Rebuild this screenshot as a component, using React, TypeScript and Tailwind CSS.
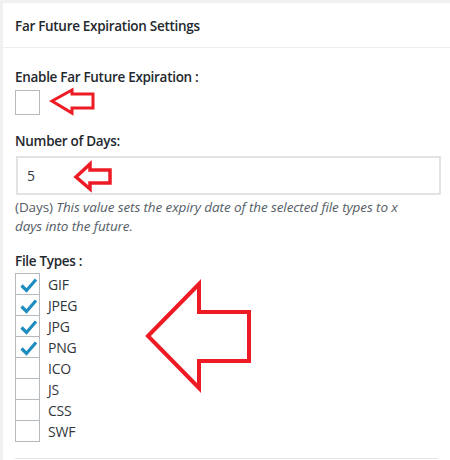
import React from "react";

const types: { name: string; checked: boolean }[] = [
  { name: "GIF", checked: true },
  { name: "JPEG", checked: true },
  { name: "JPG", checked: true },
  { name: "PNG", checked: true },
  { name: "ICO", checked: false },
  { name: "JS", checked: false },
  { name: "CSS", checked: false },
  { name: "SWF", checked: false },
];

function Check() {
  return (
    <svg width="25" height="22" viewBox="0 0 25 22" className="absolute left-0 top-0">
      <path d="M5.5 11.5 L10.5 16.5 L20 5.5" fill="none" stroke="#1e8cbe" strokeWidth="3.2" strokeLinecap="butt" strokeLinejoin="miter" />
    </svg>
  );
}

export default function App() {
  return (
    <div
      className="w-[450px] h-[460px] bg-[#f1f1f1] pt-[3px] pl-[3px] overflow-hidden text-[#23282d]"
      style={{ fontFamily: '"Open Sans", "Noto Sans", sans-serif' }}
    >
      <div className="relative bg-white h-full">
        <div className="h-[45px] border-b border-[#eeeeee] px-[12px] flex items-center pt-[3px]">
          <h2 className="text-[13.5px] font-semibold tracking-[-0.3px]">Far Future Expiration Settings</h2>
        </div>
        <div className="px-[12px] pt-[20px]">
          <div className="text-[13.5px] font-semibold leading-[18px] tracking-[-0.3px]">Enable Far Future Expiration :</div>
          <div className="mt-[4px] w-[25px] h-[25px] border border-[#b4b9be] bg-white" />
          <div className="mt-[17px] text-[13.5px] font-semibold leading-[18px] tracking-[-0.3px]">Number of Days:</div>
          <div className="mt-[6px] ml-[1px] w-[425px] h-[39px] border-2 border-[#e3e3e3] flex items-center pl-[9px] text-[14px] text-[#32373c]">
            5
          </div>
          <p className="mt-[3px] w-[400px] text-[13.5px] leading-[19px] text-[#555d66] tracking-[-0.1px]">
            (Days) <em>This value sets the expiry date of the selected file types to x days into the future.</em>
          </p>
          <div className="mt-[16px] text-[13.5px] font-semibold leading-[18px] tracking-[-0.3px]">File Types :</div>
          <div className="mt-[3px] flex flex-col">
            {types.map((t, i) => (
              <div key={t.name} className={"flex items-center " + (i > 0 ? "-mt-[1px]" : "")}>
                <div className="relative w-[25px] h-[22px] border border-[#b4b9be] bg-white shrink-0">
                  {t.checked && <Check />}
                </div>
                <span className="ml-[8px] text-[14px] text-[#32373c] tracking-[-0.2px]">{t.name}</span>
              </div>
            ))}
          </div>
          <div className="mt-[16px] border-t border-[#e5e5e5]" />
        </div>

        <svg className="absolute left-0 top-0 pointer-events-none" width="447" height="457" viewBox="3 3 447 457">
          <polygon points="52,101 72,90 72,94 93,94 93,108 72,108 72,113" fill="none" stroke="#ed1c24" strokeWidth="3" strokeLinejoin="miter" />
          <polygon points="76,177 90,164 90,170 110,170 110,183 90,183 90,189" fill="none" stroke="#ed1c24" strokeWidth="3.5" strokeLinejoin="miter" />
          <polygon points="148,336 199,284 199,312 249,312 249,361 199,361 199,388" fill="none" stroke="#ed1c24" strokeWidth="4" strokeLinejoin="miter" />
        </svg>
      </div>
    </div>
  );
}
